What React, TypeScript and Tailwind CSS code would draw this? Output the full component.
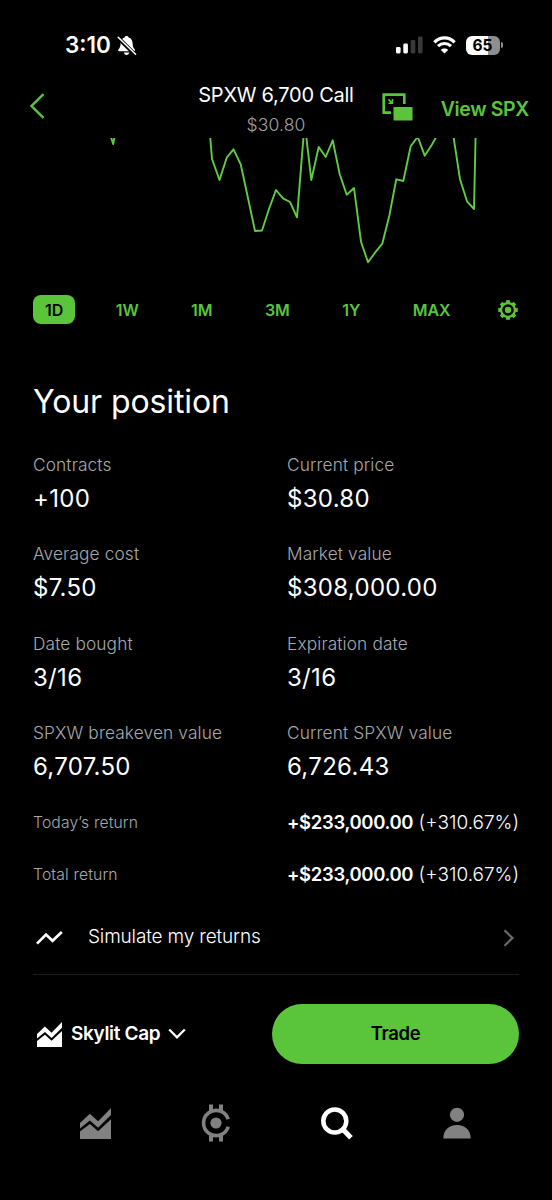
import type { ReactNode } from "react";

const ranges = ["1D", "1W", "1M", "3M", "1Y", "MAX"];

const stats = [
  { label: "Contracts", value: "+100" },
  { label: "Current price", value: "$30.80" },
  { label: "Average cost", value: "$7.50" },
  { label: "Market value", value: "$308,000.00" },
  { label: "Date bought", value: "3/16" },
  { label: "Expiration date", value: "3/16" },
  { label: "SPXW breakeven value", value: "6,707.50" },
  { label: "Current SPXW value", value: "6,726.43" },
];

const returns = [
  { label: "Today’s return", amount: "+$233,000.00", percent: "(+310.67%)" },
  { label: "Total return", amount: "+$233,000.00", percent: "(+310.67%)" },
];

function BellOffIcon() {
  return (
    <svg width="20" height="21" viewBox="0 0 20 21" fill="none">
      <path
        d="M9.6 1C8.4 1 7.7 1.6 7.5 2.5C4.9 3.3 3.7 5.5 3.6 8.2C3.5 11.8 2.8 12.8 1.5 14.3C.8 15.2 1.2 16.3 2.3 16.3H16.9C18 16.3 18.4 15.2 17.7 14.3C16.4 12.8 15.7 11.8 15.6 8.2C15.5 5.5 14.3 3.3 11.7 2.5C11.5 1.6 10.8 1 9.6 1Z"
        fill="white"
      />
      <path d="M6.8 17.6H12.4C12 19.2 11 20 9.6 20C8.2 20 7.2 19.2 6.8 17.6Z" fill="white" />
      <path d="M1 2.6L18.8 20.4" stroke="black" strokeWidth="4" />
      <path d="M1.2 2.3L18.6 19.3" stroke="white" strokeWidth="1.5" strokeLinecap="round" />
    </svg>
  );
}

function StatusBar() {
  return (
    <div className="flex h-[82px] items-start justify-between pl-[65px] pr-[49px] pt-[34px]">
      <div className="flex h-[22px] items-center gap-[6px]">
        <span className="text-[22.5px] font-semibold leading-[22px]">3:10</span>
        <BellOffIcon />
      </div>
      <div className="flex h-[22px] items-center">
        <svg width="27" height="18" viewBox="0 0 27 18" fill="white">
          <rect x="0" y="11" width="4.6" height="6.4" rx="1.3" />
          <rect x="7.3" y="7.6" width="4.6" height="9.8" rx="1.3" />
          <rect x="14.7" y="4" width="4.6" height="13.4" rx="1.3" fill="#39393b" />
          <rect x="22" y="0.4" width="4.6" height="17" rx="1.3" fill="#39393b" />
        </svg>
        <svg className="ml-[10px]" width="23" height="18" viewBox="0 0 23 18" fill="none">
          <path d="M1.4 6.3C7 .5 16 .5 21.6 6.3" stroke="white" strokeWidth="3.2" />
          <path d="M5 10.1C8.7 6.5 14.3 6.5 18 10.1" stroke="white" strokeWidth="3" />
          <path d="M11.5 17.6L7.8 13.9C9.8 12 13.2 12 15.2 13.9Z" fill="white" />
        </svg>
        <div className="ml-[10px] flex h-[19px] w-[34px] items-center justify-center rounded-[6px] bg-linear-to-r from-white from-66% to-[#8e8e90] to-66% pt-px text-[15.5px] font-bold leading-none text-black">
          65
        </div>
        <div className="ml-[1.5px] h-[6px] w-[2px] rounded-r-full bg-[#8e8e90]" />
      </div>
    </div>
  );
}

function Header() {
  return (
    <header className="grid h-[56px] grid-cols-[198px_156px_1fr]">
      <svg className="ml-[29px] mt-[11px]" width="17" height="26" viewBox="0 0 17 26" fill="none">
        <path d="M14.5 1.2L2.5 13L14.5 24.8" stroke="#5ac53a" strokeWidth="2.4" />
      </svg>
      <div className="text-center">
        <div className="whitespace-nowrap text-[20px] leading-[26px] tracking-[-0.25px]">
          SPXW 6,700 Call
        </div>
        <div className="mt-[5px] text-[17.5px] font-light leading-[24px] tracking-[0.15px] text-[#a0a2a6]">
          $30.80
        </div>
      </div>
      <div className="flex items-start justify-end pr-[23px] pt-[11px]">
        <svg className="mr-[28px]" width="31" height="28" viewBox="0 0 31 28" fill="none">
          <path d="M9 19.6H1.7V1.6H22.3V11" stroke="#5ac53a" strokeWidth="2.6" />
          <rect x="11.5" y="14" width="19" height="13.5" fill="#5ac53a" />
          <path d="M6.4 6.4L10 9.8M10.4 6V10.2H6.4" stroke="#5ac53a" strokeWidth="1.6" />
        </svg>
        <span className="whitespace-nowrap text-[19.5px] font-semibold leading-[32px] tracking-[-0.35px] text-[#5ac53a]">
          View SPX
        </span>
      </div>
    </header>
  );
}

function PriceChart() {
  return (
    <svg className="block" width="552" height="132" viewBox="0 138 552 132" fill="none">
      <g stroke="#5fcc41" strokeWidth="1.9" strokeLinejoin="round">
        <path d="M110.6 136L113.2 144L114.6 136" />
        <path d="M209.8 132L212 159L219.5 180L226.7 157.7L233.5 149.3L240.7 164.3L247.7 196.7L255 231L262 230.5L269 209L276 190L283 198.3L290 202L297 217.3L303.9 132H305.7L311.3 180L318.7 147L325.7 157L332.7 140.3L339.7 174.3L346.7 194.7L354 188L361 241.7L368 262.3L375 252.7L382.3 243.7L389.3 215.7L396.3 179.3L403.3 181L410.7 146.3L417.7 136.8L424.7 155.7L431.7 145L439 132" />
        <path d="M452.8 132L460 179.3L467 201.3L474 209L475.7 132" />
      </g>
    </svg>
  );
}

function GearIcon() {
  const teeth = [0, 45, 90, 135, 180, 225, 270, 315];
  return (
    <svg width="20" height="20" viewBox="0 0 20 20" fill="#5ac53a">
      <circle cx="10" cy="10" r="6.9" fill="none" stroke="#5ac53a" strokeWidth="2.2" />
      <circle cx="10" cy="10" r="3.2" />
      {teeth.map((deg) => (
        <rect key={deg} x="8.1" y="0.2" width="3.8" height="3" transform={`rotate(${deg} 10 10)`} />
      ))}
    </svg>
  );
}

function RangePicker() {
  return (
    <div className="mt-[25px] flex h-[29px] items-center justify-between pl-[33px] pr-[34px]">
      {ranges.map((range) => (
        <button
          key={range}
          className={
            range === "1D"
              ? "h-[29px] rounded-[8px] bg-[#5ac53a] px-[12px] text-[16px] font-semibold text-black"
              : "h-[29px] px-[12px] text-[16px] font-semibold text-[#5ac53a]"
          }
        >
          {range}
        </button>
      ))}
      <div className="pl-[7px]">
        <GearIcon />
      </div>
    </div>
  );
}

function Stat({ label, value }: { label: string; value: string }) {
  return (
    <div className="whitespace-nowrap">
      <div className="text-[17.3px] font-light leading-[24px] tracking-[0.12px] text-[#a6a9ad]">
        {label}
      </div>
      <div className="mt-[6px] text-[24px] leading-[32px] tracking-[0.3px]">{value}</div>
    </div>
  );
}

function AreaIcon({ size, color }: { size: number; color: string }) {
  return (
    <svg width={size} height={size} viewBox="0 0 30 30" fill={color}>
      <path d="M0 14.5L9.5 5.5L17.5 12.8L30 0V6.8L17.5 19.2L9.5 12L0 19.8Z" />
      <path d="M0 22.8L9.5 15.4L17.5 22.5L30 10.8V30H0Z" />
    </svg>
  );
}

function TabItem({ children }: { children: ReactNode }) {
  return <button className="flex h-[36px] items-center justify-center">{children}</button>;
}

function TabBar() {
  return (
    <nav className="grid grid-cols-4 px-[35px] pt-[41px]">
      <TabItem>
        <AreaIcon size={31} color="#818181" />
      </TabItem>
      <TabItem>
        <svg width="30" height="38" viewBox="0 0 30 38" fill="none" stroke="#818181">
          <path d="M27.2 15.3A12.6 12.6 0 1 0 27.2 22.7" strokeWidth="3.6" />
          <path d="M10 0.4V7M20 0.4V7M10 31V37.6M20 31V37.6" strokeWidth="4" />
          <circle cx="15" cy="19" r="5.6" fill="#818181" stroke="none" />
        </svg>
      </TabItem>
      <TabItem>
        <svg className="ml-[2px]" width="32" height="33" viewBox="0 0 32 33" fill="none" stroke="white">
          <circle cx="13.8" cy="14" r="11.5" strokeWidth="4.5" />
          <path d="M21.5 22L30 30.8" strokeWidth="5" />
        </svg>
      </TabItem>
      <TabItem>
        <svg width="28" height="32" viewBox="0 0 28 32" fill="#818181">
          <circle cx="14" cy="7.8" r="7.1" />
          <path d="M0.3 31.5C0.3 23.5 5.5 18 14 18C22.5 18 27.7 23.5 27.7 31.5Z" />
        </svg>
      </TabItem>
    </nav>
  );
}

export default function App() {
  return (
    <div className="h-[1200px] w-[552px] overflow-hidden bg-black font-['Inter',sans-serif] text-white">
      <StatusBar />
      <Header />
      <PriceChart />
      <RangePicker />

      <main className="px-[33px] pt-[58px]">
        <h2 className="text-[32px] leading-[40px] tracking-[-0.1px]">Your position</h2>

        <div className="mt-[31px] grid h-[344px] auto-rows-[89.3px] grid-cols-[254px_1fr]">
          {stats.map((stat) => (
            <Stat key={stat.label} {...stat} />
          ))}
        </div>

        {returns.map((row) => (
          <div key={row.label} className="flex h-[52px] items-center justify-between">
            <span className="text-[15.7px] font-light tracking-[0.15px] text-[#a6a9ad]">
              {row.label}
            </span>
            <span className="whitespace-nowrap text-[19px] font-light">
              <span className="text-[18.5px] font-semibold tracking-[-0.35px]">{row.amount}</span>{" "}
              {row.percent}
            </span>
          </div>
        ))}

        <div className="flex h-[74px] items-center border-b border-[#1b1b1d]">
          <svg className="ml-[3px]" width="27" height="14" viewBox="0 0 27 14" fill="none">
            <path d="M1 12.6L10 3.6L16.5 9.8L25.8 1" stroke="white" strokeWidth="2.7" />
          </svg>
          <span className="ml-[25px] text-[19px] font-light tracking-[-0.15px]">
            Simulate my returns
          </span>
          <svg className="ml-auto mr-[4px]" width="12" height="18" viewBox="0 0 12 18" fill="none">
            <path d="M1.5 1.3L9.5 9L1.5 16.7" stroke="#6a6b6e" strokeWidth="2.2" />
          </svg>
        </div>

        <div className="mt-[29px] flex h-[60px] items-center">
          <div className="ml-[4px]">
            <AreaIcon size={25} color="white" />
          </div>
          <span className="ml-[9px] pt-px text-[19px] font-semibold tracking-[-0.35px]">
            Skylit Cap
          </span>
          <svg className="ml-[8px]" width="18" height="12" viewBox="0 0 18 12" fill="none">
            <path d="M1.2 1.5L9 9.3L16.8 1.5" stroke="white" strokeWidth="2.3" />
          </svg>
          <button className="ml-auto h-[60px] w-[247px] rounded-full bg-[#5ac53a] text-[18.5px] font-semibold tracking-[-0.4px] text-black">
            Trade
          </button>
        </div>
      </main>

      <TabBar />
    </div>
  );
}
